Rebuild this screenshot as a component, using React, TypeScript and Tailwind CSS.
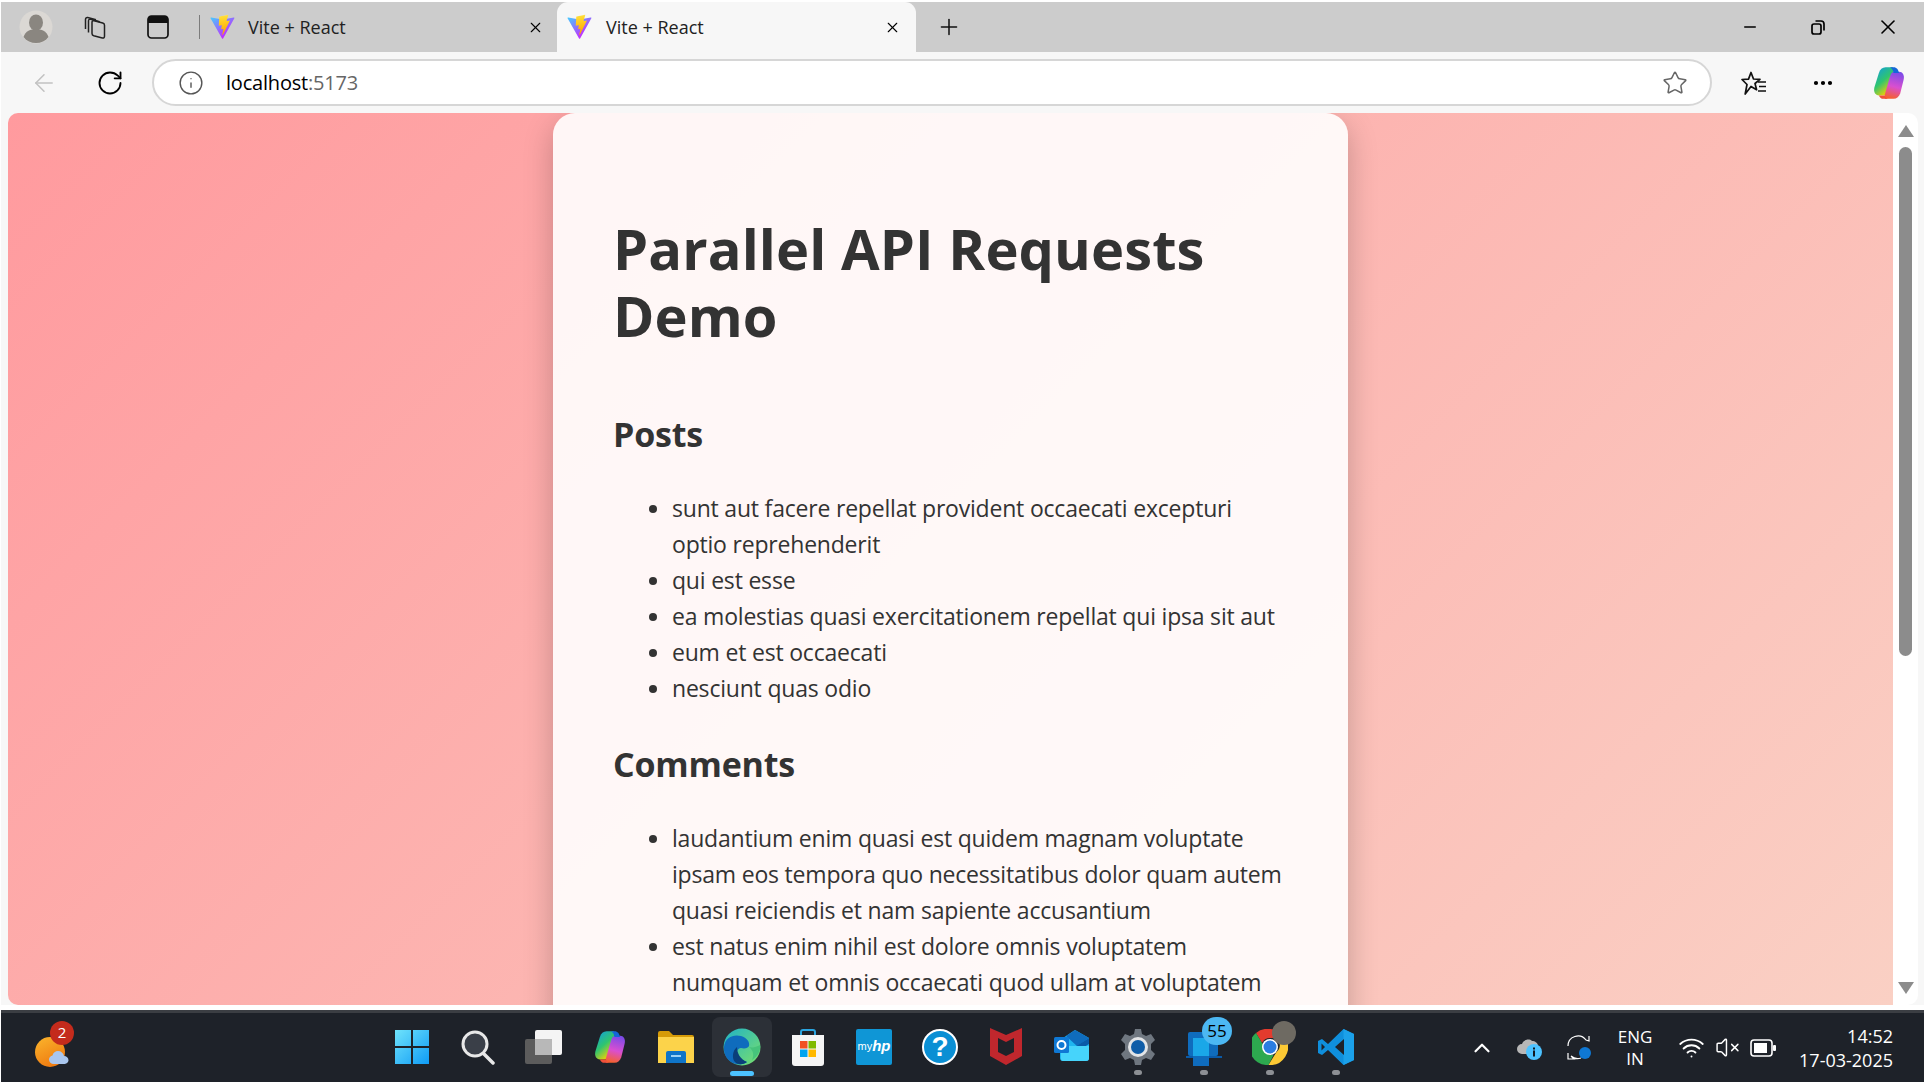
import React from 'react';
import { ArrowLeft, ChevronUp, Info, Minus, MoreHorizontal, Plus, RotateCw, Star, VolumeX, Wifi, X } from 'lucide-react';

const posts = [
  'sunt aut facere repellat provident occaecati excepturi optio reprehenderit',
  'qui est esse',
  'ea molestias quasi exercitationem repellat qui ipsa sit aut',
  'eum et est occaecati',
  'nesciunt quas odio',
];

const comments = [
  'laudantium enim quasi est quidem magnam voluptate ipsam eos tempora quo necessitatibus dolor quam autem quasi reiciendis et nam sapiente accusantium',
  'est natus enim nihil est dolore omnis voluptatem numquam et omnis occaecati quod ullam at voluptatem error expedita pariatur',
  'quia molestiae reprehenderit quasi aspernatur aut expedita occaecati aliquam eveniet laudantium',
];

const ViteLogo = () => (
  <svg width="25" height="26" viewBox="0 0 410 404">
    <defs>
      <linearGradient id="vite-a" x1="6" y1="33" x2="235" y2="344" gradientUnits="userSpaceOnUse">
        <stop stopColor="#41D1FF" />
        <stop offset="1" stopColor="#BD34FE" />
      </linearGradient>
      <linearGradient id="vite-b" x1="194" y1="8" x2="236" y2="292" gradientUnits="userSpaceOnUse">
        <stop stopColor="#FFEA83" />
        <stop offset="0.08" stopColor="#FFDD35" />
        <stop offset="1" stopColor="#FFA800" />
      </linearGradient>
    </defs>
    <path d="M399.6 59.5 215 389.7c-3.8 6.8-13.6 6.9-17.5.1L9.3 59.5c-4.2-7.4 2.1-16.3 10.5-14.8l184.8 33c1.2.2 2.4.2 3.6 0l180.9-33c8.4-1.5 14.8 7.3 10.5 14.8Z" fill="url(#vite-a)" />
    <path d="M292.9 1.6 156.3 28.4c-2.2.4-3.9 2.3-4 4.6l-8.4 142.1c-.2 3.3 2.9 5.9 6.1 5.2l38-8.8c3.6-.8 6.8 2.3 6.1 5.9l-11.3 55.4c-.8 3.7 2.8 6.9 6.4 5.8l23.5-7.1c3.6-1.1 7.1 2.1 6.4 5.8l-18 87c-1.1 5.4 6.1 8.4 9.1 3.7l2-3.1 111.4-222.2c1.9-3.7-1.3-8-5.4-7.2l-39.2 7.6c-3.7.7-6.8-2.7-5.8-6.3l25.6-88.6c1-3.6-2.1-7.1-5.9-6.3Z" fill="url(#vite-b)" />
  </svg>
);

const CopilotLogo = ({ size }: { size: number }) => (
  <svg width={size} height={size} viewBox="0 0 32 32">
    <defs>
      <linearGradient id={`cp-a-${size}`} x1="0" y1="0" x2="0.6" y2="1">
        <stop stopColor="#0f9ae8" />
        <stop offset="0.55" stopColor="#2fc56f" />
        <stop offset="1" stopColor="#f7d000" />
      </linearGradient>
      <linearGradient id={`cp-b-${size}`} x1="0.6" y1="0" x2="0.4" y2="1">
        <stop stopColor="#7b4be8" />
        <stop offset="0.55" stopColor="#d94fd0" />
        <stop offset="1" stopColor="#f5602f" />
      </linearGradient>
    </defs>
    <path d="M19 2h-6c-3 0-5 2-6 5L3 20c-1 4 1 7 4 7h4c2 0 3-1 4-4l5-17c.5-2-.2-4-1-4Z" fill={`url(#cp-a-${size})`} />
    <path d="M13 30h7c3 0 5-2 6-5l3-12c1-4-1-7-4-7h-4c-2 0-3 1-4 4l-5 17c-.5 2 .2 3 1 3Z" fill={`url(#cp-b-${size})`} />
    <path d="M17 2h3c3 0 4 2 5 5h-5c-.500-3-1.500-4-3-5Z" fill="#1466d8" />
    <path d="M15 30h-4c-2 0-3-1-4-3h5c.5 1 1.500 2 3 3Z" fill="#f0503a" />
  </svg>
);

const TabClose = () => <X size={17} strokeWidth={1.6} className="text-black" />;

function BrowserTabs() {
  return (
    <div className="flex h-[50px] items-stretch bg-[#cccccc] pl-[17px]">
      <div className="flex w-[35px] items-center justify-center">
        <svg width="34" height="34" viewBox="0 0 34 34">
          <circle cx="17" cy="17" r="16.5" fill="#dbd8d4" />
          <ellipse cx="17" cy="12.5" rx="7" ry="8" fill="#8a8680" />
          <path d="M4.5 27c2-6 7-8 12.500-8s10.500 2 12.500 8c-3 4-7.500 6-12.500 6s-9.500-2-12.500-6Z" fill="#8a8680" />
        </svg>
      </div>
      <div className="ml-[24px] flex w-[36px] items-center justify-center">
        <svg width="24" height="25" viewBox="0 0 24 25" fill="none" stroke="#222" strokeWidth="1.5" strokeLinejoin="round">
          <path d="M9 7.500c0-1.500 1-2 2.200-1.700l8.500 2.200c1 .3 1.800 1.200 1.800 2.300v11c0 1.400-1 2-2.200 1.700l-8.500-2.300c-1-.3-1.800-1.200-1.800-2.300Z" />
          <path d="M5.500 17.500V6c0-1.400 1-2 2.200-1.700l9 2.400" />
          <path d="M2.500 14V4.500C2.500 3 3.500 2.300 4.700 2.600l8.300 2.200" />
        </svg>
      </div>
      <div className="ml-[33px] flex w-[24px] items-center justify-center">
        <svg width="22" height="24" viewBox="0 0 22 24" fill="none">
          <rect x="1" y="1" width="20" height="22" rx="3.500" stroke="#111" strokeWidth="1.7" />
          <path d="M4 1h14a3 3 0 0 1 3 3v4H1V4a3 3 0 0 1 3-3Z" fill="#111" />
        </svg>
      </div>
      <div className="my-[13px] ml-[29px] w-px bg-[#7c7c7c]" />
      <div className="flex w-[357px] items-center pl-[10px] pr-[13px]">
        <ViteLogo />
        <span className="ml-[13px] flex-1 text-[18px] text-[#222]">Vite + React</span>
        <TabClose />
      </div>
      <div className="relative flex w-[359px] items-center rounded-t-[11px] bg-[#f7f7f7] pl-[10px] pr-[15px]">
        <ViteLogo />
        <span className="ml-[14px] flex-1 text-[18px] text-[#222]">Vite + React</span>
        <TabClose />
      </div>
      <div className="ml-[19px] flex w-[27px] items-center justify-center">
        <Plus size={26} strokeWidth={1.4} className="text-[#111]" />
      </div>
      <div className="flex-1" />
      <div className="flex w-[34px] items-center justify-center"><Minus size={18} strokeWidth={2} className="text-black" /></div>
      <div className="ml-[34px] flex w-[34px] items-center justify-center">
        <svg width="18" height="18" viewBox="0 0 18 18" fill="none" stroke="#000" strokeWidth="1.7">
          <rect x="3" y="6" width="9" height="10" rx="2" />
          <path d="M6.500 3h5.500a3 3 0 0 1 3 3v6.500" />
        </svg>
      </div>
      <div className="ml-[36px] mr-[19px] flex w-[34px] items-center justify-center"><X size={24} strokeWidth={1.6} className="text-black" /></div>
    </div>
  );
}

function AddressBar() {
  return (
    <div className="flex h-[61px] items-center bg-[#f7f7f7]">
      <div className="flex w-[86px] justify-center"><ArrowLeft size={28} strokeWidth={1.3} className="text-[#c2c2c2]" /></div>
      <div className="flex w-[46px] justify-center"><RotateCw size={28} strokeWidth={1.6} className="text-black" /></div>
      <div className="ml-[19px] flex h-[47px] w-[1560px] items-center rounded-full border-2 border-[#d6d6d6] bg-white pl-[24px] pr-[22px]">
        <Info size={26} strokeWidth={1.3} className="text-[#555]" />
        <span className="ml-[22px] flex-1 text-[20px] tracking-[-0.2px] text-black">localhost<span className="text-[#666]">:5173</span></span>
        <Star size={26} strokeWidth={1.4} className="text-[#666]" />
      </div>
      <div className="ml-[28px] flex w-[28px] justify-center">
        <svg width="28" height="28" viewBox="0 0 28 28" fill="none" stroke="#111" strokeWidth="1.7" strokeLinejoin="round">
          <path d="M11 3.500l2.500 6.500 6.500.3-5 4.200 1.600 6.300L11 17.500l-5.800 7.500 1.800-9.500-5-5 6.500-.4Z" />
          <path d="M18 13h8M19 17.500h7M18 22h8" />
        </svg>
      </div>
      <div className="ml-[41px] flex w-[28px] justify-center"><MoreHorizontal size={24} strokeWidth={2.2} className="text-black" /></div>
      <div className="ml-[34px] flex w-[36px] justify-center"><CopilotLogo size={36} /></div>
      <div className="flex-1" />
    </div>
  );
}

function Scrollbar() {
  return (
    <div className="flex w-[25px] flex-col items-center rounded-r-[10px] bg-white">
      <div className="mt-[12px] h-0 w-0 border-x-[8px] border-b-[12px] border-x-transparent border-b-[#8c8c8c]" />
      <div className="mt-[10px] h-[509px] w-[13px] rounded-full bg-[#8c8c8c]" />
      <div className="flex-1" />
      <div className="mb-[11px] h-0 w-0 border-x-[8px] border-t-[12px] border-x-transparent border-t-[#8c8c8c]" />
    </div>
  );
}

function DemoPage() {
  return (
    <div className="flex-1 overflow-hidden rounded-l-[10px] bg-[linear-gradient(135deg,#ff9a9e_0%,#fad0c4_100%)]">
      <div className="mx-auto h-[1400px] w-[795px] rounded-t-[22px] bg-white/90 px-[60px] pt-[102px] text-[#333] shadow-[0_10px_30px_rgba(0,0,0,0.22)]">
        <h1 className="text-[56px] font-bold leading-[67px] tracking-[0.1px]">Parallel API Requests Demo</h1>
        <h2 className="mt-[65px] text-[34px] font-bold leading-[40px] tracking-[-0.2px]">Posts</h2>
        <ul className="mt-[36px] list-disc pl-[59px] text-[23px] leading-[36px] tracking-[-0.2px]">
          {posts.map(p => <li key={p}>{p}</li>)}
        </ul>
        <h2 className="mt-[38px] text-[34px] font-bold leading-[40px] tracking-[-0.2px]">Comments</h2>
        <ul className="mt-[36px] list-disc pl-[59px] text-[23px] leading-[36px] tracking-[-0.2px]">
          {comments.map(c => <li key={c}>{c}</li>)}
        </ul>
      </div>
    </div>
  );
}

const Slot = ({ children, dot, active }: { children: React.ReactNode; dot?: boolean; active?: boolean }) => (
  <div className={active
    ? 'relative flex h-[60px] w-[60px] mx-[3px] items-center justify-center rounded-[8px] bg-[#2c3037]'
    : 'relative flex h-[60px] w-[66px] items-center justify-center'}>
    {children}
    {dot && <span className="absolute bottom-[2px] h-[5px] w-[8px] rounded-full bg-[#8d9095]" />}
    {active && <span className="absolute bottom-[1px] h-[5px] w-[24px] rounded-full bg-[#4cc2ff]" />}
  </div>
);

function Taskbar() {
  return (
    <div className="flex h-[72px] items-center border-t-[3px] border-[#3b3e43] bg-[#1e2229] text-white">
      <div className="relative ml-[34px] flex h-[50px] w-[36px] items-center">
        <svg width="36" height="34" viewBox="0 0 36 34" className="mt-[8px]">
          <defs>
            <linearGradient id="sun" x1="0" y1="0" x2="0.5" y2="1">
              <stop stopColor="#fbb62d" />
              <stop offset="1" stopColor="#ef7c11" />
            </linearGradient>
          </defs>
          <circle cx="15" cy="17" r="15" fill="url(#sun)" />
          <path d="M19 29c-3 0-5-2-5-4.500 0-2 1.500-3.500 3.500-4 .6-3 3-4.500 5.500-4.500 3 0 5.500 2 6 5 2.500 0 4.500 2 4.500 4.200S31 29 29 29Z" fill="#a9c6ee" />
        </svg>
        <span className="absolute left-[15px] top-[-2px] flex h-[24px] w-[24px] items-center justify-center rounded-full bg-[#c42b1c] text-[15px]">2</span>
      </div>
      <div className="mb-[2px] ml-[308px] flex items-center">
        <Slot>
          <svg width="36" height="36" viewBox="0 0 36 36">
            <defs>
              <linearGradient id="win" x1="0" y1="0" x2="1" y2="1">
                <stop stopColor="#6fe3fb" />
                <stop offset="1" stopColor="#0f9bf5" />
              </linearGradient>
            </defs>
            <path d="M1 1h16v16H1ZM19 1h16v16H19ZM1 19h16v16H1ZM19 19h16v16H19Z" fill="url(#win)" />
          </svg>
        </Slot>
        <Slot>
          <svg width="36" height="36" viewBox="0 0 36 36" fill="none">
            <circle cx="15" cy="15" r="12" fill="#3a3f48" stroke="#e8e8e8" strokeWidth="3" />
            <path d="M24 25l9 9" stroke="#e8e8e8" strokeWidth="3.500" strokeLinecap="round" />
          </svg>
        </Slot>
        <Slot>
          <svg width="38" height="34" viewBox="0 0 38 34">
            <rect x="0" y="9" width="27" height="25" rx="2" fill="#5c5c5c" />
            <rect x="10" y="0" width="27" height="25" rx="2" fill="#f4f4f4" />
            <rect x="10" y="9" width="17" height="16" fill="#b8b8b8" />
          </svg>
        </Slot>
        <Slot><CopilotLogo size={36} /></Slot>
        <Slot>
          <svg width="36" height="32" viewBox="0 0 36 32">
            <path d="M0 2a2 2 0 0 1 2-2h9l4 4h19a2 2 0 0 1 2 2v26H0Z" fill="#d69b08" />
            <path d="M0 6h36v26H0Z" fill="#fcd34a" />
            <path d="M8 32V22a2 2 0 0 1 2-2h16a2 2 0 0 1 2 2v10Z" fill="#0f75c9" />
            <rect x="13" y="24" width="10" height="2" fill="#9bd2f5" />
          </svg>
        </Slot>
        <Slot active>
          <svg width="38" height="38" viewBox="0 0 38 38">
            <defs>
              <linearGradient id="edge-a" x1="0" y1="0" x2="1" y2="1">
                <stop stopColor="#1fb2c8" />
                <stop offset="1" stopColor="#7be06a" />
              </linearGradient>
            </defs>
            <circle cx="19" cy="19" r="18.500" fill="url(#edge-a)" />
            <path d="M1 19C2 9 11 6 18 8c6 2 9 6 8 10-1 2-4 3-8 2-4 .5-5 4-3 8 1.500 3 5 5 9 6-3 2-7 3-11 2C6 35 0 27 1 19Z" fill="#0f6cbd" />
            <path d="M14 19c0 6 3 12 10 15-4 3-9 3-12 0-3-3-3-11 2-15Z" fill="#0a3f7a" />
            <path d="M26 19c4 1 7 0 11-2 1 6-3 12-8 15 2-4 2-9-3-13Z" fill="#46c37b" />
          </svg>
        </Slot>
        <Slot>
          <svg width="32" height="38" viewBox="0 0 32 38" fill="none">
            <path d="M9 7V4a2 2 0 0 1 2-2h10a2 2 0 0 1 2 2v3" stroke="#2aa5e0" strokeWidth="2" />
            <path d="M0 7h32v28a3 3 0 0 1-3 3H3a3 3 0 0 1-3-3Z" fill="#f5f5f5" />
            <rect x="8" y="13" width="7.500" height="7.500" fill="#f25022" />
            <rect x="16.500" y="13" width="7.500" height="7.500" fill="#7fba00" />
            <rect x="8" y="21.500" width="7.500" height="7.500" fill="#00a4ef" />
            <rect x="16.500" y="21.500" width="7.500" height="7.500" fill="#ffb900" />
          </svg>
        </Slot>
        <Slot>
          <div className="flex h-[36px] w-[36px] items-center justify-center rounded-[2px] bg-[#0f96d6] font-['Liberation_Sans',sans-serif] text-[11px] text-white">
            my<span className="text-[15px] font-bold italic">hp</span>
          </div>
        </Slot>
        <Slot>
          <div className="flex h-[36px] w-[36px] items-center justify-center rounded-full border-[2px] border-white bg-[#0a8fd4] font-['Liberation_Sans',sans-serif] text-[28px] font-bold leading-none text-white">?</div>
        </Slot>
        <Slot>
          <svg width="32" height="37" viewBox="0 0 32 37">
            <path d="M0 0l16 7 16-7v28L16 37 0 28Z" fill="#c0272d" />
            <path d="M8 10l8 4 8-4v14l-8 4-8-4Z" fill="#1e2229" />
          </svg>
        </Slot>
        <Slot>
          <svg width="36" height="34" viewBox="0 0 36 34">
            <path d="M21 0l14 8v20a3 3 0 0 1-3 3H9a3 3 0 0 1-3-3V10Z" fill="#1fb6f0" />
            <path d="M12 6l9-6 14 8-12 8Z" fill="#0f6cbd" />
            <path d="M16 20l19-12v6L19 24Z" fill="#0a5aa8" />
            <path d="M7 16h28v12a3 3 0 0 1-3 3H9a2 2 0 0 1-2-2Z" fill="#46d4fb" />
            <rect x="0" y="7" width="15" height="16" rx="1.500" fill="#0f78d4" />
            <circle cx="7.500" cy="15" r="4" fill="none" stroke="#fff" strokeWidth="2" />
          </svg>
        </Slot>
        <Slot dot>
          <svg width="36" height="36" viewBox="0 0 36 36">
            <path d="M15 0h6l1 5 4 2 5-2 4 6-4 4v6l4 4-4 6-5-2-4 2-1 5h-6l-1-5-4-2-5 2-4-6 4-4v-6L1 11l4-6 5 2 4-2Z" fill="#6f7780" />
            <circle cx="18" cy="18" r="10" fill="#e3e5e7" />
            <circle cx="18" cy="18" r="7" fill="#0f5da8" />
          </svg>
        </Slot>
        <Slot dot>
          <div className="relative">
            <svg width="36" height="38" viewBox="0 0 36 38">
              <rect x="2" y="4" width="30" height="24" rx="2" fill="#0f6cbd" />
              <rect x="0" y="28" width="36" height="2" fill="#0a5aa8" />
              <rect x="7" y="10" width="16" height="28" fill="#1aa7e8" />
              <rect x="7" y="28" width="16" height="10" fill="#0f6cbd" />
            </svg>
            <span className="absolute left-[16px] top-[-11px] flex h-[28px] w-[30px] items-center justify-center rounded-full bg-[#4cb8f3] text-[17px] text-black">55</span>
          </div>
        </Slot>
        <Slot dot>
          <div className="relative">
            <svg width="36" height="36" viewBox="0 0 36 36">
              <path d="M18 0a18 18 0 0 1 15.600 9H18a9 9 0 0 0-8 5L4 4a18 18 0 0 1 14-4Z" fill="#e33b2e" />
              <path d="M4 4l8.500 14a9 9 0 0 0 9 8l-5 10A18 18 0 0 1 4 4Z" fill="#2da94f" />
              <path d="M33.600 9A18 18 0 0 1 16.500 36l8-13a9 9 0 0 0 0-14Z" fill="#fcc934" />
              <circle cx="18" cy="18" r="8" fill="#fff" />
              <circle cx="18" cy="18" r="6.500" fill="#2a7de1" />
            </svg>
            <span className="absolute left-[20px] top-[-8px] h-[24px] w-[24px] rounded-full bg-[#6e6a62]" />
          </div>
        </Slot>
        <Slot dot>
          <svg width="36" height="36" viewBox="0 0 36 36">
            <path d="M25.500 0 36 5v26l-10.500 5L10 21l-6 5-4-2V12l4-2 6 5Z" fill="#0f8fdc" />
            <path d="M25.500 0 36 5v26l-10.500 5Z" fill="#1ba1ea" />
            <path d="M26 10l-9 8 9 8Z" fill="#1e2229" />
            <path d="M3.500 14.500 7 18l-3.500 3.500Z" fill="#1e2229" />
          </svg>
        </Slot>
      </div>
      <div className="flex-1" />
      <div className="flex w-[30px] justify-center"><ChevronUp size={26} strokeWidth={2} /></div>
      <div className="ml-[18px] flex w-[30px] justify-center">
        <svg width="26" height="24" viewBox="0 0 26 24">
          <path d="M5 18a5 5 0 0 1 0-10c1-4 7-6 10-3 3 0 6 2 6 5v8Z" fill="#b7b7b7" />
          <circle cx="17" cy="16" r="8" fill="#4cc2ff" />
          <rect x="16" y="14.500" width="2" height="6" fill="#12181f" />
          <rect x="16" y="11.500" width="2" height="2" fill="#12181f" />
        </svg>
      </div>
      <div className="ml-[19px] flex w-[30px] justify-center">
        <svg width="26" height="26" viewBox="0 0 26 26" fill="none" stroke="#fff" strokeWidth="1.2">
          <path d="M2 11A10 10 0 0 1 20 5l3 1V1" />
          <path d="M2 18v6h6l-3-3a10 10 0 0 0 10 2" />
          <circle cx="19" cy="18" r="6" fill="#0f78d4" stroke="none" />
        </svg>
      </div>
      <div className="ml-[21px] w-[40px] text-center text-[17px] leading-[22px]">ENG<br />IN</div>
      <div className="ml-[21px] flex w-[30px] justify-center"><Wifi size={27} strokeWidth={1.7} /></div>
      <div className="ml-[6px] flex w-[30px] justify-center"><VolumeX size={25} strokeWidth={1.4} /></div>
      <div className="ml-[6px] flex w-[30px] justify-center">
        <svg width="26" height="18" viewBox="0 0 26 18" fill="none">
          <rect x="1" y="1" width="21" height="16" rx="3" stroke="#fff" strokeWidth="1.600" />
          <rect x="4" y="4" width="13" height="10" fill="#fff" />
          <rect x="23" y="6" width="3" height="6" rx="1" fill="#fff" />
        </svg>
      </div>
      <div className="ml-[15px] mr-[31px] w-[100px] text-right text-[18px] leading-[24px]">14:52<br />17-03-2025</div>
    </div>
  );
}

export default function App() {
  return (
    <div className="flex h-[1084px] w-[1924px] flex-col overflow-hidden bg-white pb-[2px] pl-px pt-[2px] font-['Open_Sans',sans-serif]">
      <BrowserTabs />
      <AddressBar />
      <div className="flex h-[892px] bg-[#f7f7f7] pl-[7px] pr-[6px]">
        <DemoPage />
        <Scrollbar />
      </div>
      <div className="h-[5px] bg-white" />
      <Taskbar />
    </div>
  );
}
